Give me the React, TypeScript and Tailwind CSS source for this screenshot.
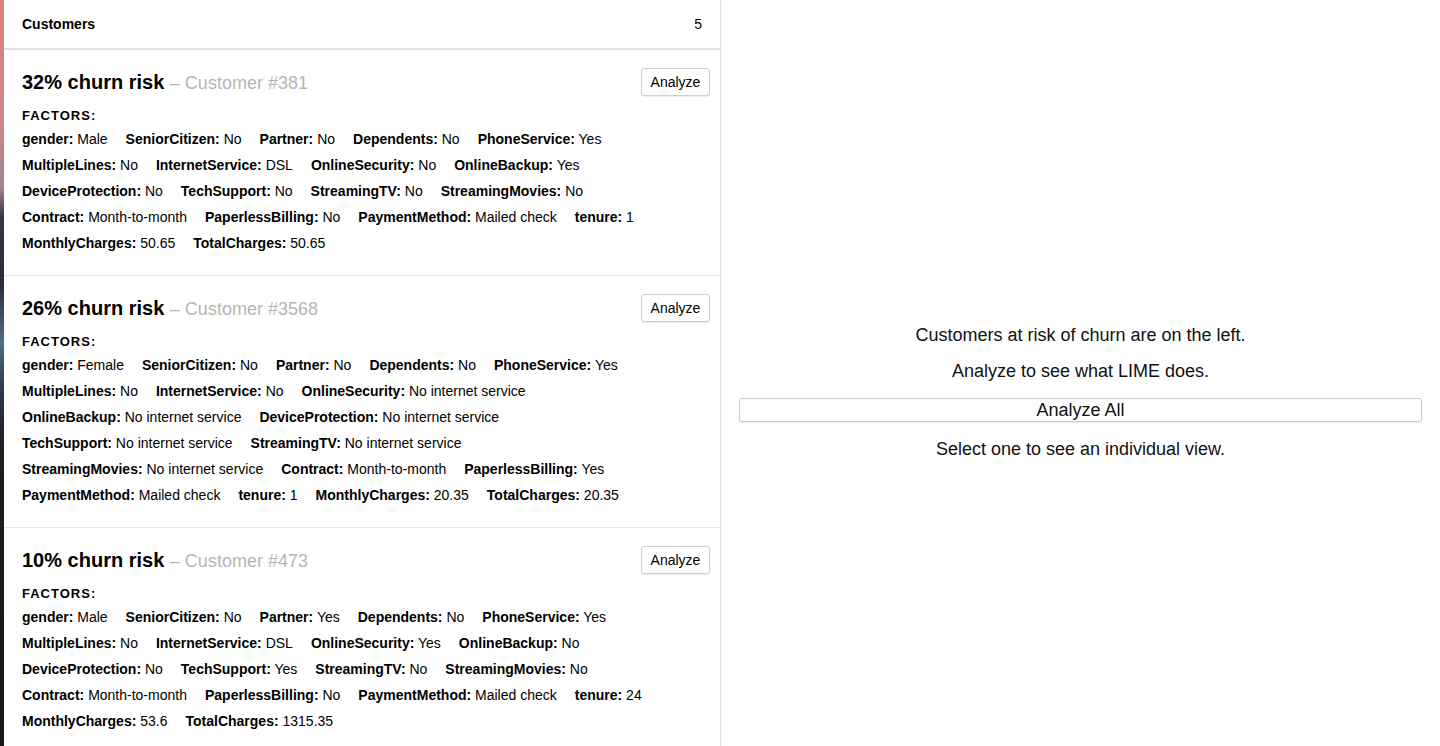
import React from "react";

type Customer = {
  id: number;
  risk: number;
  factors: [string, string][];
};

const customers: Customer[] = [
  {
    id: 381,
    risk: 32,
    factors: [
      ["gender", "Male"],
      ["SeniorCitizen", "No"],
      ["Partner", "No"],
      ["Dependents", "No"],
      ["PhoneService", "Yes"],
      ["MultipleLines", "No"],
      ["InternetService", "DSL"],
      ["OnlineSecurity", "No"],
      ["OnlineBackup", "Yes"],
      ["DeviceProtection", "No"],
      ["TechSupport", "No"],
      ["StreamingTV", "No"],
      ["StreamingMovies", "No"],
      ["Contract", "Month-to-month"],
      ["PaperlessBilling", "No"],
      ["PaymentMethod", "Mailed check"],
      ["tenure", "1"],
      ["MonthlyCharges", "50.65"],
      ["TotalCharges", "50.65"],
    ],
  },
  {
    id: 3568,
    risk: 26,
    factors: [
      ["gender", "Female"],
      ["SeniorCitizen", "No"],
      ["Partner", "No"],
      ["Dependents", "No"],
      ["PhoneService", "Yes"],
      ["MultipleLines", "No"],
      ["InternetService", "No"],
      ["OnlineSecurity", "No internet service"],
      ["OnlineBackup", "No internet service"],
      ["DeviceProtection", "No internet service"],
      ["TechSupport", "No internet service"],
      ["StreamingTV", "No internet service"],
      ["StreamingMovies", "No internet service"],
      ["Contract", "Month-to-month"],
      ["PaperlessBilling", "Yes"],
      ["PaymentMethod", "Mailed check"],
      ["tenure", "1"],
      ["MonthlyCharges", "20.35"],
      ["TotalCharges", "20.35"],
    ],
  },
  {
    id: 473,
    risk: 10,
    factors: [
      ["gender", "Male"],
      ["SeniorCitizen", "No"],
      ["Partner", "Yes"],
      ["Dependents", "No"],
      ["PhoneService", "Yes"],
      ["MultipleLines", "No"],
      ["InternetService", "DSL"],
      ["OnlineSecurity", "Yes"],
      ["OnlineBackup", "No"],
      ["DeviceProtection", "No"],
      ["TechSupport", "Yes"],
      ["StreamingTV", "No"],
      ["StreamingMovies", "No"],
      ["Contract", "Month-to-month"],
      ["PaperlessBilling", "No"],
      ["PaymentMethod", "Mailed check"],
      ["tenure", "24"],
      ["MonthlyCharges", "53.6"],
      ["TotalCharges", "1315.35"],
    ],
  },
];

const CustomerCard = ({ customer }: { customer: Customer }) => (
  <div className="border-b border-[#e6e6e6] pl-[18px] pr-[10px] pt-[19px] pb-[19px]">
    <div className="flex items-start justify-between">
      <h2 className="text-[20px] font-bold leading-[26px] text-black">
        {customer.risk}% churn risk{" "}
        <span className="text-[18px] font-normal text-[#b5b5b5]">– Customer #{customer.id}</span>
      </h2>
      {/* sits a bit higher than the title line, without making the row taller */}
      <button className="-mt-[1px] h-[28px] w-[69px] rounded-[3px] border border-[#cfcfcf] bg-white text-[14px] text-black shadow-[0_1px_1px_rgba(0,0,0,0.08)]">
        Analyze
      </button>
    </div>
    <div className="mt-[10px] text-[13px] font-bold leading-[20px] tracking-[1px] text-black">FACTORS:</div>
    <div className="flex flex-wrap gap-x-[18px] text-[14px] leading-[26px] text-black">
      {customer.factors.map(([key, value]) => (
        <span key={key} className="whitespace-nowrap">
          <b>{key}:</b> {value}
        </span>
      ))}
    </div>
  </div>
);

export default function App() {
  return (
    <div className="flex h-[746px] overflow-hidden bg-white font-['Liberation_Sans',Arial,sans-serif]">
      {/* desktop showing through on the left */}
      <div className="w-[4px] shrink-0 bg-[linear-gradient(to_bottom,#d8817b_0%,#c98686_18%,#a58495_25%,#3a3445_29%,#2a2c3a_38%,#4f6e86_46%,#2e3a4a_52%,#1d1c24_60%,#17161c_100%)]" />

      {/* Customer list */}
      <div className="w-[717px] shrink-0 overflow-hidden border-r border-[#e2e2e2]">
        <header className="flex h-[50px] items-center justify-between border-b-2 border-[#e2e2e2] px-[18px] text-[14px] text-black">
          <span className="font-bold">Customers</span>
          <span>5</span>
        </header>
        {customers.map((c) => (
          <CustomerCard key={c.id} customer={c} />
        ))}
      </div>

      {/* Detail panel */}
      <main className="flex flex-1 flex-col justify-center px-[18px] pt-[37px] text-center text-[18px] text-[#111]">
        <p className="leading-[20px]">Customers at risk of churn are on the left.</p>
        <p className="mt-[16px] leading-[20px]">Analyze to see what LIME does.</p>
        <button className="mt-[17px] h-[24px] w-full rounded-[3px] border border-[#cccccc] bg-white text-[18px] leading-[20px] text-[#111] shadow-[0_1px_1px_rgba(0,0,0,0.08)]">
          Analyze All
        </button>
        <p className="mt-[17px] leading-[20px]">Select one to see an individual view.</p>
      </main>
    </div>
  );
}
